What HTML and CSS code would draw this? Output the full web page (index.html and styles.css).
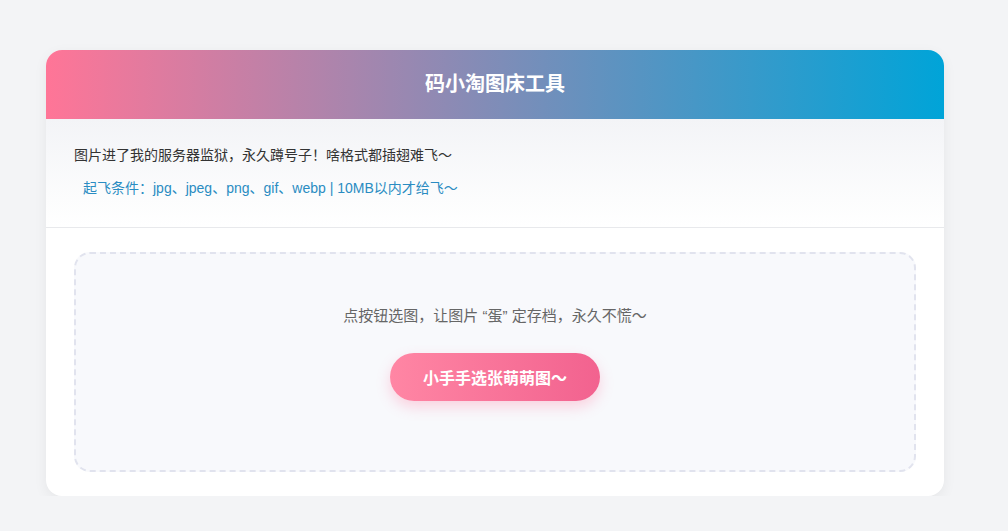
FILE: index.html
```html
<!DOCTYPE html>
<html lang="zh-CN">
<head>
  <meta charset="UTF-8">
  <title>码小淘图床工具</title>
  <link rel="stylesheet" href="styles.css">
</head>
<body>
  <div class="card">
    <header class="card-header">码小淘图床工具</header>
    <div class="info">
      <p class="intro">图片进了我的服务器监狱，永久蹲号子！啥格式都插翅难飞～</p>
      <p class="rules">起飞条件：jpg、jpeg、png、gif、webp | 10MB以内才给飞～</p>
    </div>
    <div class="upload-wrap">
      <div class="upload-area">
        <p class="hint">点按钮选图，让图片 “蛋” 定存档，永久不慌～</p>
        <button class="pick-btn">小手手选张萌萌图～</button>
      </div>
    </div>
  </div>
</body>
</html>
```

FILE: styles.css
```css
body {
  margin: 0;
  background: #f3f4f6;
  font-family: "Liberation Sans", "Noto Sans CJK SC", sans-serif;
  color: #333;
}
.card {
  width: 898px;
  margin: 50px 0 0 46px;
  background: #fff;
  border-radius: 16px;
  overflow: hidden;
  box-shadow: 0 4px 14px rgba(0, 0, 0, 0.06);
}
.card-header {
  height: 69px;
  line-height: 69px;
  text-align: center;
  color: #fff;
  font-size: 20px;
  font-weight: bold;
  background: linear-gradient(to right, #ff7597, #00a4d8);
}
.info {
  height: 109px;
  box-sizing: border-box;
  padding: 26px 28px 0;
  border-bottom: 1px solid #e8e9ec;
  background: linear-gradient(to bottom, #f3f4f7, #fff);
}
.info p {
  margin: 0;
  font-size: 14px;
  line-height: 20px;
}
.intro {
  color: #333;
}
.rules {
  margin-top: 13px !important;
  padding-left: 9px;
  color: #2a8cc2;
}
.upload-wrap {
  padding: 24px 28px 24px;
}
.upload-area {
  height: 220px;
  box-sizing: border-box;
  border: 2px dashed #e1e3ee;
  border-radius: 16px;
  background: #f8f9fc;
  display: flex;
  flex-direction: column;
  align-items: center;
  padding-top: 52px;
}
.hint {
  margin: 0;
  font-size: 15px;
  line-height: 20px;
  color: #666;
}
.pick-btn {
  margin-top: 27px;
  width: 210px;
  height: 48px;
  border: none;
  border-radius: 24px;
  color: #fff;
  font-family: inherit;
  font-size: 16px;
  font-weight: bold;
  background: linear-gradient(to right, #ff86a4, #f2628f);
  box-shadow: 0 6px 14px rgba(255, 120, 160, 0.3);
  cursor: pointer;
}
```
